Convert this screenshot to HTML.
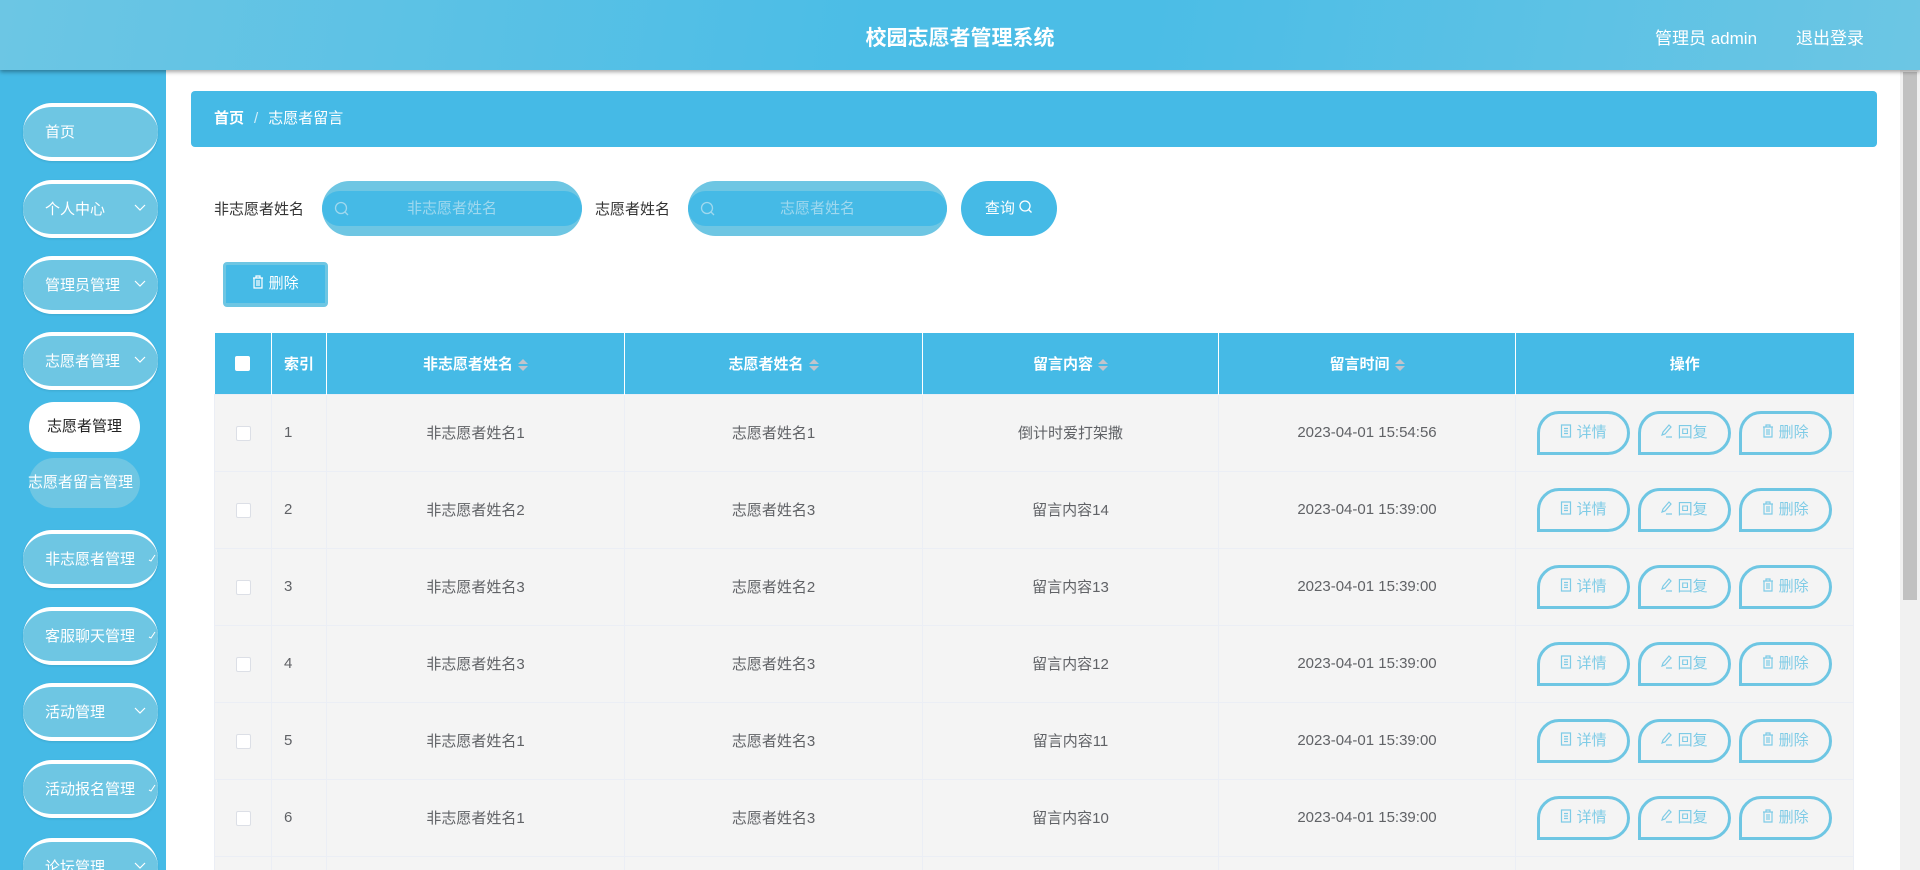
<!DOCTYPE html>
<html><head><meta charset="utf-8">
<style>
*{box-sizing:border-box;margin:0;padding:0}
html,body{width:1920px;height:870px;overflow:hidden}
body{background:#fff;font-family:"Liberation Sans","Noto Sans CJK SC",sans-serif;position:relative}
.hdr{position:absolute;left:0;top:0;width:1920px;height:70px;background:linear-gradient(100deg,#6cc6e4 0%,#4bbde6 45%,#4bbde6 60%,#6cc6e4 100%);box-shadow:0 2px 4px rgba(0,0,0,.35);z-index:5}
.hdr .t{position:absolute;left:0;width:1920px;top:22px;text-align:center;color:#fff;font-size:21px;font-weight:bold}
.hdr .r{position:absolute;top:24px;color:#fff;font-size:17px}
.side{position:absolute;left:0;top:70px;width:166px;height:800px;background:#45bae6;overflow:hidden}
.pill{position:absolute;left:23px;width:135px;height:58px;border-radius:29px;background:#6ec6e3;border-top:4px solid #fff;border-bottom:4px solid #fff;color:#fff;font-size:15px;line-height:52px;padding-left:22px;box-shadow:0 1px 2px rgba(0,0,0,.1)}
.pill svg{position:absolute;right:12px;top:20px}
.pill .ck{position:absolute;right:2px;top:20px}
.sub{position:absolute;left:29px;width:111px;height:50px;border-radius:25px;font-size:15px;line-height:50px;text-align:center}
.scroll{position:absolute;left:1900px;top:70px;width:20px;height:800px;background:#f1f1f1}
.scroll div{position:absolute;left:3px;top:2px;width:14px;height:528px;background:#c1c1c1}
.main{position:absolute;left:0;top:0;width:1900px;height:870px;overflow:hidden}
.bc{position:absolute;left:191px;top:91px;width:1686px;height:56px;background:#45bae6;border-radius:4px;color:#fff;font-size:15px;line-height:56px;padding-left:23px}
.lbl{position:absolute;top:198px;font-size:15px;color:#333}
.inp{position:absolute;top:181px;height:55px;border-radius:28px;background:#6ec6e3;}
.inp .in{position:absolute;left:0;right:0;top:10px;height:35px;border-radius:18px;background:#45bae6;color:#9fd8ee;font-size:15px;text-align:center;line-height:35px}
.inp svg{position:absolute;left:12px;top:12px}
.btnq{position:absolute;left:961px;top:181px;width:96px;height:55px;border-radius:28px;background:#45bae6;color:#fff;font-size:15px;line-height:55px;text-align:center}
.btnd{position:absolute;left:223px;top:262px;width:105px;height:45px;border-radius:4px;background:#45bae6;border:3px solid #6ec6e3;border-bottom-width:4px;color:#fff;font-size:15px;line-height:38px;text-align:center}
table{position:absolute;left:214px;top:333px;width:1639px;border-collapse:collapse;table-layout:fixed}
th{height:61px;background:#45bae6;color:#fff;font-size:15px;font-weight:bold;border-right:1px solid #fff;text-align:center}
td{height:77px;background:#f4f4f4;border:1px solid #ebeef5;color:#606266;font-size:15px;text-align:center}
td.l,th.l{text-align:left;padding-left:12px}
.cb{display:inline-block;width:15px;height:15px;border:1px solid #dcdfe6;background:#fff;border-radius:2px;vertical-align:middle}
th .cb{border-color:#fff}
.sort{display:inline-block;margin-left:5px;vertical-align:middle;width:10px}
.sort i{display:block;width:0;height:0;border-left:5px solid transparent;border-right:5px solid transparent;margin:2px 0}
.op{display:inline-block;width:93px;height:44px;border:3px solid #6ec6e3;border-radius:22px 22px 22px 0;color:#7ecbe6;font-size:15px;line-height:38px;margin:0 4px;vertical-align:middle;background:#f4f4f4}
</style></head><body>
<div class="main">
<div class="bc"><b>首页</b><span style="color:#cfeefa;margin:0 10px">/</span>志愿者留言</div>
<div class="lbl" style="left:214px">非志愿者姓名</div>
<div class="inp" style="left:322px;width:260px"><div class="in">非志愿者姓名</div><svg width="16" height="30" viewBox="0 0 16 30"><circle cx="7" cy="15" r="5.5" fill="none" stroke="#9fd8ee" stroke-width="1.3"/><path d="M11 19l3 3" stroke="#9fd8ee" stroke-width="1.3"/></svg></div>
<div class="lbl" style="left:595px">志愿者姓名</div>
<div class="inp" style="left:688px;width:259px"><div class="in">志愿者姓名</div><svg width="16" height="30" viewBox="0 0 16 30"><circle cx="7" cy="15" r="5.5" fill="none" stroke="#9fd8ee" stroke-width="1.3"/><path d="M11 19l3 3" stroke="#9fd8ee" stroke-width="1.3"/></svg></div>
<div class="btnq">查询 <svg width="14" height="14" viewBox="0 0 14 14" style="vertical-align:-1px"><circle cx="6" cy="6" r="5" fill="none" stroke="#fff" stroke-width="1.3"/><path d="M9.5 9.5l3 3" stroke="#fff" stroke-width="1.3"/></svg></div>
<div class="btnd"><svg width="12" height="14" viewBox="0 0 12 14" style="vertical-align:-1px"><path d="M1 3h10M4 3V1h4v2M2 3v10h8V3M5 5v6M7 5v6" fill="none" stroke="#fff" stroke-width="1.2"/></svg> 删除</div>
<table>
<colgroup><col style="width:57px"><col style="width:55px"><col style="width:298px"><col style="width:298px"><col style="width:296px"><col style="width:297px"><col style="width:338px"></colgroup>
<tr><th><span class="cb"></span></th><th class="l">索引</th>
<th>非志愿者姓名<span class="sort"><i style="border-bottom:5px solid #c0c4cc"></i><i style="border-top:5px solid #c0c4cc"></i></span></th>
<th>志愿者姓名<span class="sort"><i style="border-bottom:5px solid #c0c4cc"></i><i style="border-top:5px solid #c0c4cc"></i></span></th>
<th>留言内容<span class="sort"><i style="border-bottom:5px solid #c0c4cc"></i><i style="border-top:5px solid #c0c4cc"></i></span></th>
<th>留言时间<span class="sort"><i style="border-bottom:5px solid #c0c4cc"></i><i style="border-top:5px solid #c0c4cc"></i></span></th>
<th style="border-right:none">操作</th></tr>
<tr><td><span class="cb"></span></td><td class="l">1</td><td>非志愿者姓名1</td><td>志愿者姓名1</td><td>倒计时爱打架撒</td><td>2023-04-01 15:54:56</td><td class="ops"></td></tr>
<tr><td><span class="cb"></span></td><td class="l">2</td><td>非志愿者姓名2</td><td>志愿者姓名3</td><td>留言内容14</td><td>2023-04-01 15:39:00</td><td class="ops"></td></tr>
<tr><td><span class="cb"></span></td><td class="l">3</td><td>非志愿者姓名3</td><td>志愿者姓名2</td><td>留言内容13</td><td>2023-04-01 15:39:00</td><td class="ops"></td></tr>
<tr><td><span class="cb"></span></td><td class="l">4</td><td>非志愿者姓名3</td><td>志愿者姓名3</td><td>留言内容12</td><td>2023-04-01 15:39:00</td><td class="ops"></td></tr>
<tr><td><span class="cb"></span></td><td class="l">5</td><td>非志愿者姓名1</td><td>志愿者姓名3</td><td>留言内容11</td><td>2023-04-01 15:39:00</td><td class="ops"></td></tr>
<tr><td><span class="cb"></span></td><td class="l">6</td><td>非志愿者姓名1</td><td>志愿者姓名3</td><td>留言内容10</td><td>2023-04-01 15:39:00</td><td class="ops"></td></tr>
<tr><td><span class="cb"></span></td><td class="l">7</td><td>非志愿者姓名1</td><td>志愿者姓名3</td><td>留言内容9</td><td>2023-04-01 15:39:00</td><td class="ops"></td></tr>
</table>
</div>
<div class="hdr"><div class="t">校园志愿者管理系统</div><div class="r" style="left:1655px">管理员 admin</div><div class="r" style="left:1796px">退出登录</div></div>
<div class="side">
<div class="pill" style="top:33px">首页</div>
<div class="pill" style="top:110px">个人中心<svg width="12" height="8" viewBox="0 0 12 8"><path d="M1 1l5 5 5-5" fill="none" stroke="#fff" stroke-width="1.2"/></svg></div>
<div class="pill" style="top:186px">管理员管理<svg width="12" height="8" viewBox="0 0 12 8"><path d="M1 1l5 5 5-5" fill="none" stroke="#fff" stroke-width="1.2"/></svg></div>
<div class="pill" style="top:262px">志愿者管理<svg width="12" height="8" viewBox="0 0 12 8"><path d="M1 1l5 5 5-5" fill="none" stroke="#fff" stroke-width="1.2"/></svg></div>
<div class="sub" style="top:332px;background:#fff;color:#222">志愿者管理</div>
<div class="sub" style="top:388px;background:#6ec6e3;color:#fff;white-space:nowrap;text-indent:-8px">志愿者留言管理</div>
<div class="pill" style="top:460px">非志愿者管理<svg class="ck" width="8" height="8" viewBox="0 0 8 8"><path d="M1 6l2 1 4-6" fill="none" stroke="#fff" stroke-width="1"/></svg></div>
<div class="pill" style="top:537px">客服聊天管理<svg class="ck" width="8" height="8" viewBox="0 0 8 8"><path d="M1 6l2 1 4-6" fill="none" stroke="#fff" stroke-width="1"/></svg></div>
<div class="pill" style="top:613px">活动管理<svg width="12" height="8" viewBox="0 0 12 8"><path d="M1 1l5 5 5-5" fill="none" stroke="#fff" stroke-width="1.2"/></svg></div>
<div class="pill" style="top:690px">活动报名管理<svg class="ck" width="8" height="8" viewBox="0 0 8 8"><path d="M1 6l2 1 4-6" fill="none" stroke="#fff" stroke-width="1"/></svg></div>
<div class="pill" style="top:768px">论坛管理<svg width="12" height="8" viewBox="0 0 12 8"><path d="M1 1l5 5 5-5" fill="none" stroke="#fff" stroke-width="1.2"/></svg></div>
</div>
<div class="scroll"><div></div></div>
<script>
var h='<span class="op"><svg width="12" height="14" viewBox="0 0 12 14" style="vertical-align:-1px"><path d="M1.5 1h9v12h-9zM4 4.5h4M4 7h4M4 9.5h4" fill="none" stroke="#7ecbe6" stroke-width="1.2"/></svg> 详情</span><span class="op"><svg width="12" height="14" viewBox="0 0 12 14" style="vertical-align:-1px"><path d="M8 1l2 2-6 7-3 1 1-3zM5 13h6" fill="none" stroke="#7ecbe6" stroke-width="1.2"/></svg> 回复</span><span class="op"><svg width="12" height="14" viewBox="0 0 12 14" style="vertical-align:-1px"><path d="M1 3h10M4 3V1h4v2M2 3v10h8V3M5 5v6M7 5v6" fill="none" stroke="#7ecbe6" stroke-width="1.2"/></svg> 删除</span>';
document.querySelectorAll('.ops').forEach(function(e){e.innerHTML=h});
</script>
</body></html>
